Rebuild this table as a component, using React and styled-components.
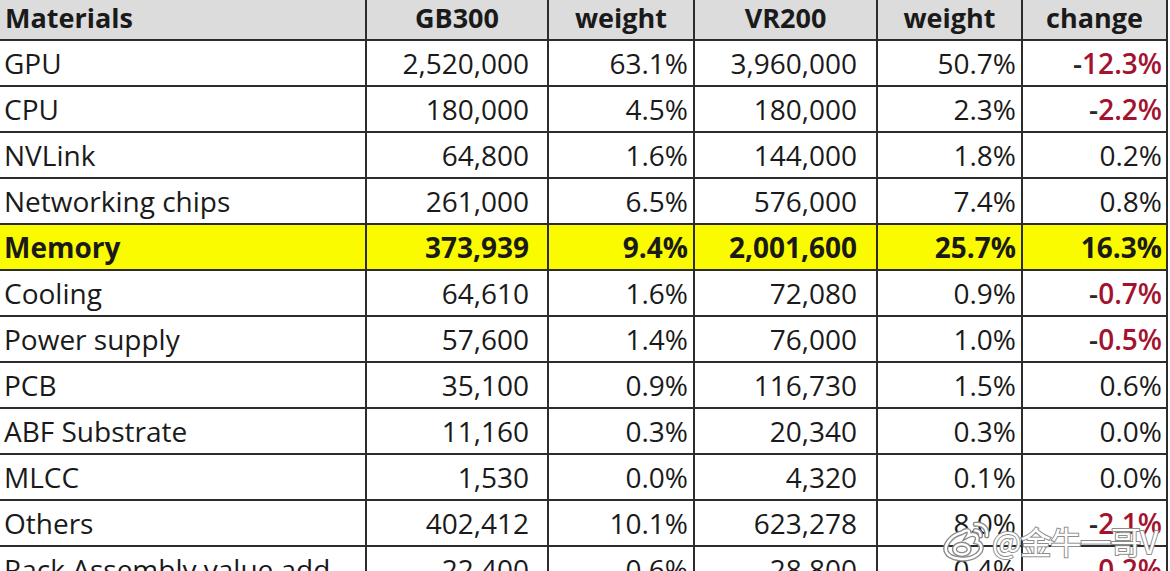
import React from 'react';
import styled, { createGlobalStyle } from 'styled-components';

const rows = [
	['GPU', '2,520,000', '63.1%', '3,960,000', '50.7%', '-12.3%'],
	['CPU', '180,000', '4.5%', '180,000', '2.3%', '-2.2%'],
	['NVLink', '64,800', '1.6%', '144,000', '1.8%', '0.2%'],
	['Networking chips', '261,000', '6.5%', '576,000', '7.4%', '0.8%'],
	['Memory', '373,939', '9.4%', '2,001,600', '25.7%', '16.3%'],
	['Cooling', '64,610', '1.6%', '72,080', '0.9%', '-0.7%'],
	['Power supply', '57,600', '1.4%', '76,000', '1.0%', '-0.5%'],
	['PCB', '35,100', '0.9%', '116,730', '1.5%', '0.6%'],
	['ABF Substrate', '11,160', '0.3%', '20,340', '0.3%', '0.0%'],
	['MLCC', '1,530', '0.0%', '4,320', '0.1%', '0.0%'],
	['Others', '402,412', '10.1%', '623,278', '8.0%', '-2.1%'],
	['Rack Assembly value add', '22,400', '0.6%', '28,800', '0.4%', '-0.2%'],
];

const headers = ['Materials', 'GB300', 'weight', 'VR200', 'weight', 'change'];
const widths = [367, 182, 146, 183, 145, 145];
// value columns sit further from the right rule than the percentage ones
const padRight = [0, 18, 5, 19, 5, 4];

export default function App() {
	return (
		<>
			<GlobalStyle/>
			<Page>
				<Table>
					<colgroup>
						{widths.map((w, i) => <col key={i} style={{width: w}}/>)}
					</colgroup>
					<thead>
						<tr>
							{headers.map((h, i) => (
								<HeadCell key={i} $first={i === 0}>{h}</HeadCell>
							))}
						</tr>
					</thead>
					<tbody>
						{rows.map(row => {
							const highlight = row[0] === 'Memory';
							return (
								<Row key={row[0]} $highlight={highlight}>
									{row.map((value, i) => {
										if (i === 0) {
											return <NameCell key={i} $bold={highlight}>{value}</NameCell>;
										}
										const negative = i === 5 && value.startsWith('-');
										return (
											<Cell key={i} $pad={padRight[i]} $bold={highlight}>
												{negative ? <><Minus>-</Minus><Neg>{value.slice(1)}</Neg></> : value}
											</Cell>
										);
									})}
								</Row>
							);
						})}
					</tbody>
				</Table>
				<Watermark>
					<WeiboLogo/>
					<MarkText>@金牛一哥V</MarkText>
				</Watermark>
			</Page>
		</>
	);
}

const logoPaths = (
	<>
		<path d="M19 12 C8 15 2 24 4 30 C7 38 25 40 34 33 C40 28 38 22 33 21 C36 15 31 12 25 15 C28 10 24 8 19 12 Z"/>
		<ellipse cx="19" cy="28" rx="7" ry="5"/>
		<path d="M32 4 C39 3 44 8 43 15"/>
		<path d="M32 10 C35 10 37 12 37 15"/>
	</>
);

function WeiboLogo() {
	return (
		<svg width="50" height="42" viewBox="0 0 48 40" fill="none">
			<g stroke="#8c8c8c" strokeWidth="5" strokeLinecap="round">{logoPaths}</g>
			<g stroke="#ffffff" strokeWidth="2.4" strokeLinecap="round">{logoPaths}</g>
		</svg>
	);
}

const GlobalStyle = createGlobalStyle`
	body {
		margin: 0;
		background: #ffffff;
		overflow: hidden;
	}
`;

const Page = styled.div`
	position: relative;
	width: 1170px;
	height: 571px;
	overflow: hidden;
	font-family: "Open Sans", "Noto Sans", "Noto Sans CJK SC", sans-serif;
	color: #1a1a1a;
`;

const Table = styled.table`
	border-collapse: collapse;
	table-layout: fixed;
	width: 1169px;
	margin-left: -1px;
	font-size: 28px;
`;

const HeadCell = styled.th`
	height: 36px;
	padding: 0 0 3px ${props => props.$first ? '6px' : '0'};
	text-align: ${props => props.$first ? 'left' : 'center'};
	background: #dcdcdc;
	font-size: 27px;
	font-weight: 700;
	border: 2px solid #2c2c2c;
	border-top: none;
	border-left: ${props => props.$first ? 'none' : '2px solid #2c2c2c'};
	line-height: 32px;
	vertical-align: middle;
`;

const Row = styled.tr`
	height: 46px;
	background: ${props => props.$highlight ? '#fbfb00' : '#ffffff'};
`;

const NameCell = styled.td`
	padding: 0 0 0 5px;
	border: 2px solid #2c2c2c;
	border-left: none;
	font-weight: ${props => props.$bold ? 700 : 400};
	white-space: nowrap;
	overflow: hidden;
	vertical-align: middle;
	line-height: 40px;
`;

const Cell = styled.td`
	padding: 0 ${props => props.$pad}px 0 0;
	border: 2px solid #2c2c2c;
	text-align: right;
	font-weight: ${props => props.$bold ? 700 : 400};
	white-space: nowrap;
	vertical-align: middle;
	line-height: 40px;
`;

const Minus = styled.span`
	color: #2a2a2a;
	font-weight: 600;
`;

const Neg = styled.span`
	color: #a3122e;
	font-weight: 600;
`;

const Watermark = styled.div`
	position: absolute;
	left: 942px;
	top: 520px;
	display: flex;
	align-items: center;
	white-space: nowrap;
	pointer-events: none;
`;

const MarkText = styled.span`
	font-family: "Noto Sans CJK SC", "Noto Sans", sans-serif;
	font-size: 31px;
	font-weight: 400;
	color: #ffffff;
	-webkit-text-stroke: 2px #8c8c8c;
	paint-order: stroke fill;
	letter-spacing: -1px;
	line-height: 42px;
`;
